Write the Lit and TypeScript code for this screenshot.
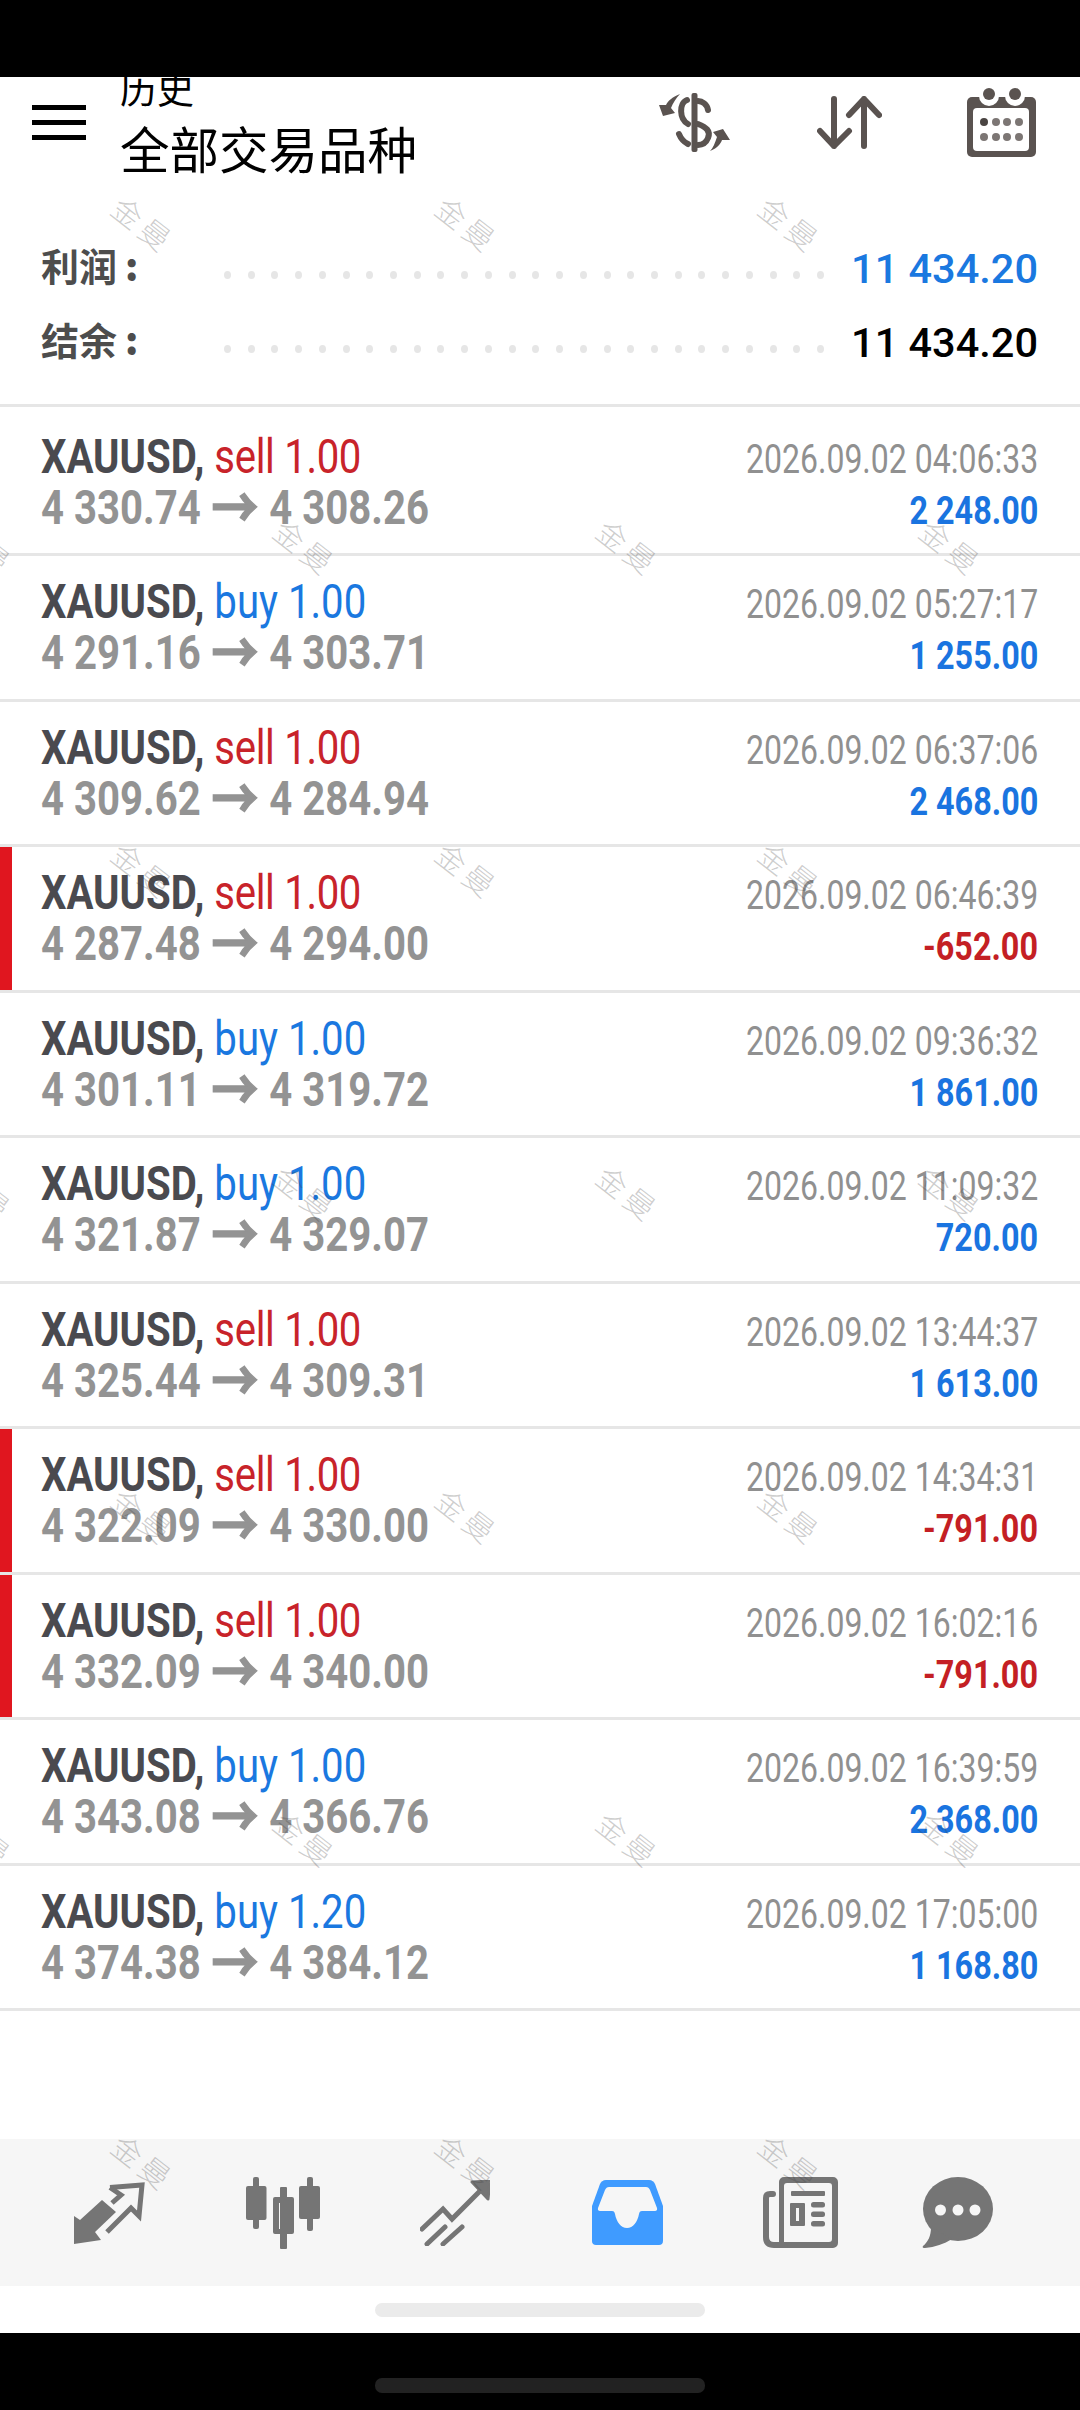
import { LitElement, html, css, svg } from 'lit';
import { customElement } from 'lit/decorators.js';

type Trade = { side: 'sell' | 'buy'; lots: string; open: string; close: string; time: string; profit: string };

const trades: Trade[] = [
  { side: 'sell', lots: '1.00', open: '4 330.74', close: '4 308.26', time: '04:06:33', profit: '2 248.00' },
  { side: 'buy', lots: '1.00', open: '4 291.16', close: '4 303.71', time: '05:27:17', profit: '1 255.00' },
  { side: 'sell', lots: '1.00', open: '4 309.62', close: '4 284.94', time: '06:37:06', profit: '2 468.00' },
  { side: 'sell', lots: '1.00', open: '4 287.48', close: '4 294.00', time: '06:46:39', profit: '-652.00' },
  { side: 'buy', lots: '1.00', open: '4 301.11', close: '4 319.72', time: '09:36:32', profit: '1 861.00' },
  { side: 'buy', lots: '1.00', open: '4 321.87', close: '4 329.07', time: '11:09:32', profit: '720.00' },
  { side: 'sell', lots: '1.00', open: '4 325.44', close: '4 309.31', time: '13:44:37', profit: '1 613.00' },
  { side: 'sell', lots: '1.00', open: '4 322.09', close: '4 330.00', time: '14:34:31', profit: '-791.00' },
  { side: 'sell', lots: '1.00', open: '4 332.09', close: '4 340.00', time: '16:02:16', profit: '-791.00' },
  { side: 'buy', lots: '1.00', open: '4 343.08', close: '4 366.76', time: '16:39:59', profit: '2 368.00' },
  { side: 'buy', lots: '1.20', open: '4 374.38', close: '4 384.12', time: '17:05:00', profit: '1 168.80' },
];

// watermark grid, alternating rows are shifted by half a step
const marks: { x: number; y: number }[] = [];
for (let r = 0; r < 7; r++) {
  const y = 224 + r * 323;
  const xs = r % 2 === 0 ? [144, 468, 791] : [-17, 306, 629, 952];
  for (const x of xs) marks.push({ x, y });
}

const dots = Array.from({ length: 26 });

const dollarIcon = svg`<svg width="72" height="59" viewBox="0 0 72 59" fill="#5a5350">
  <rect x="32.5" y="0" width="6" height="59" rx="2"/>
  <g fill="none" stroke="#5a5350" stroke-width="6" stroke-linecap="round">
    <path d="M49 17C48 11 43 8 39 8"/>
    <path d="M28 7C20 10 20 26 29 31"/>
    <path d="M39 31C47 34 52 38 49 45C47 50 43 52 39 52"/>
    <path d="M20 41C22 46 25 49 29 51"/>
  </g>
  <path d="M21 1C13 4 9 8 7 12L0 12L4 23L16 20L12 15C14 10 17 5 21 1Z"/>
  <path d="M51 58C59 55 62 50 63 47L71 47L64 36L54 39L58 44C56 50 54 55 51 58Z"/>
</svg>`;

const sortIcon = svg`<svg width="65" height="53" viewBox="0 0 65 53" fill="none" stroke="#5a5350" stroke-width="6" stroke-linecap="round" stroke-linejoin="round">
  <path d="M17 3V50M3 35L17 50L32 35"/>
  <path d="M47 50V3M32 19L47 3L62 19"/>
</svg>`;

const calendarIcon = svg`<svg width="69" height="69" viewBox="0 0 69 69">
  <rect y="9" width="69" height="60" rx="5" fill="#5a5350"/>
  <circle cx="22" cy="8" r="10" fill="#fff"/>
  <circle cx="48" cy="8" r="10" fill="#fff"/>
  <circle cx="22" cy="6" r="6" fill="#5a5350"/>
  <circle cx="48" cy="6" r="6" fill="#5a5350"/>
  <rect x="6" y="20" width="56" height="43" rx="4" fill="#fff"/>
  <g fill="#7c7674">
    <circle cx="17" cy="34" r="4" fill="#4a4442"/><circle cx="29" cy="34" r="4"/><circle cx="40" cy="34" r="4"/><circle cx="52" cy="34" r="4"/>
    <circle cx="17" cy="49" r="4"/><circle cx="29" cy="49" r="4"/><circle cx="40" cy="49" r="4"/><circle cx="52" cy="49" r="4"/>
  </g>
</svg>`;

const tradeIcon = svg`<svg width="72" height="62" viewBox="0 0 72 62" fill="#757575">
  <path d="M0 62L0 34L6 38L28 18L42 30L21 50L27 58Z"/>
  <g fill="none" stroke="#757575" stroke-width="5">
    <path d="M36 5.5L68 3L65 34L57 26L33 50"/>
    <path d="M36 5.5L47 13L38 21"/>
  </g>
</svg>`;

const candleIcon = svg`<svg width="74" height="72" viewBox="0 0 74 72" fill="#757575">
  <rect x="7" y="0" width="6" height="52" rx="2"/>
  <rect x="0" y="9" width="20.5" height="34" rx="2"/>
  <rect x="34" y="10" width="7" height="62" rx="1"/>
  <path fill-rule="evenodd" d="M29 20H46a2 2 0 0 1 2 2V55a2 2 0 0 1-2 2H29a2 2 0 0 1-2-2V22a2 2 0 0 1 2-2ZM33 26V52H41V26Z"/>
  <rect x="61" y="0" width="6" height="54" rx="2"/>
  <rect x="53" y="9" width="21" height="33" rx="2"/>
</svg>`;

const growthIcon = svg`<svg width="70" height="66" viewBox="0 0 70 66" fill="#757575">
  <g fill="none" stroke="#757575" stroke-width="5" stroke-linecap="round">
    <path d="M2 49L23 29L32 39L64 7"/>
    <path d="M7 64L25 47"/>
    <path d="M23 64L42 47"/>
  </g>
  <path d="M52 2L70 1L68 19Z" stroke="#757575" stroke-width="3" stroke-linejoin="round"/>
</svg>`;

const trayIcon = svg`<svg width="71" height="65" viewBox="0 0 71 65">
  <path d="M14 0H57C60 0 62 2 63 4L71 26V61C71 63.500 69.500 65 67 65H4C1.500 65 0 63.500 0 61V26L8 4C9 2 11 0 14 0Z" fill="#3f9bff"/>
  <path d="M17 7H54C56 7 57 8 58 10L65 28C65.500 30 64.500 31 63 31H50C48 31 47.500 32 47 34C45.500 42 41 48 35 48C29 48 24.500 42 23 34C22.500 32 22 31 20 31H8C6.500 31 5.500 30 6 28L13 10C14 8 15 7 17 7Z" fill="#f6f6f6"/>
</svg>`;

const newsIcon = svg`<svg width="75" height="71" viewBox="0 0 75 71" fill="#757575">
  <path fill-rule="evenodd" d="M21 0H70a5 5 0 0 1 5 5V66a5 5 0 0 1-5 5H21a5 5 0 0 1-5-5V5a5 5 0 0 1 5-5ZM24 6a3 3 0 0 0-3 3V65H66a3 3 0 0 0 3-3V9a3 3 0 0 0-3-3Z"/>
  <path d="M10 17H7Q3 17 3 21V60Q3 68 11 68H22" fill="none" stroke="#757575" stroke-width="6" stroke-linecap="round"/>
  <rect x="28" y="14" width="34" height="5" rx="1"/>
  <path fill-rule="evenodd" d="M28 26H41a1 1 0 0 1 1 1V48a1 1 0 0 1-1 1H28a1 1 0 0 1-1-1V27a1 1 0 0 1 1-1ZM33 31V44H36V31Z"/>
  <rect x="48" y="25" width="14" height="5.500" rx="2.500"/>
  <rect x="48" y="34.500" width="14" height="5.500" rx="2.500"/>
  <rect x="48" y="44" width="14" height="5.500" rx="2.500"/>
</svg>`;

const chatIcon = svg`<svg width="71" height="71" viewBox="0 0 71 71" fill="#757575">
  <ellipse cx="36" cy="32" rx="35" ry="32"/>
  <path d="M9 50C9 59 6 65 1 69C0 70.500 1 71 3 71C13 70 22 67 30 62Z"/>
  <g fill="#f6f6f6"><circle cx="18.500" cy="33" r="5.500"/><circle cx="36" cy="33" r="5.500"/><circle cx="53" cy="33" r="5.500"/></g>
</svg>`;

@customElement('app-root')
export class AppRoot extends LitElement {
  static styles = css`
    :host {
      display: block;
      position: relative;
      width: 1080px;
      height: 2410px;
      overflow: hidden;
      background: #fff;
      font-family: Roboto, 'Noto Sans CJK SC', sans-serif;
    }
    .screen {
      display: flex;
      flex-direction: column;
      height: 100%;
    }
    .status {
      flex: none;
      height: 77px;
      background: #000;
      position: relative;
      z-index: 2;
    }
    .header {
      flex: none;
      height: 154px;
      display: flex;
      align-items: flex-start;
      padding: 0 44px 0 32px;
      overflow: hidden;
    }
    .burger {
      flex: none;
      width: 54px;
      height: 90px;
      display: flex;
      flex-direction: column;
      justify-content: center;
      gap: 10px;
      margin-right: 34px;
    }
    .burger i {
      display: block;
      height: 5px;
      background: #000;
    }
    .title {
      font-family: 'Noto Sans CJK SC', sans-serif;
      color: #000;
      margin-top: -7px;
    }
    .title .small {
      font-size: 37px;
      line-height: 36px;
      height: 36px;
    }
    .title .big {
      font-size: 49.500px;
      line-height: 50px;
      margin-top: 17px;
      white-space: nowrap;
    }
    .tools {
      margin-left: auto;
      height: 90px;
      display: flex;
      align-items: center;
    }
    .tools svg {
      display: block;
    }
    .tools .sort {
      margin: 0 85px 0 86px;
    }
    .summary {
      flex: none;
      height: 176px;
      padding: 0 42px 0 41px;
      box-sizing: border-box;
      border-bottom: 3px solid #e6e6e6;
    }
    .sum-row {
      height: 74px;
      display: flex;
      align-items: center;
    }
    .sum-label {
      width: 183px;
      flex: none;
      font-family: 'Noto Sans CJK SC', sans-serif;
      font-weight: 700;
      font-size: 38px;
      color: #4d4d4d;
      margin-bottom: 8px;
    }
    .sum-label b {
      margin-left: 8px;
    }
    .dots {
      width: 600px;
      flex: none;
      display: flex;
      justify-content: space-between;
      margin-top: 14px;
    }
    .dots i {
      width: 7px;
      height: 8px;
      border-radius: 50%;
      background: #e6e6e6;
    }
    .sum-value {
      margin-left: auto;
      font-size: 41.500px;
      font-weight: 500;
      color: #000;
    }
    .sum-value.blue {
      color: #1a78e0;
    }
    .list {
      flex: none;
      padding-top: 3.500px;
    }
    .row {
      height: 145.500px;
      box-sizing: border-box;
      border-bottom: 3px solid #e6e6e6;
      display: flex;
    }
    .bar {
      flex: none;
      width: 12px;
    }
    .bar.red {
      background: #e0161f;
    }
    .body {
      flex: 1;
      padding: 20px 42px 0 29px;
    }
    .line {
      height: 51px;
      display: flex;
      justify-content: space-between;
      align-items: baseline;
      white-space: nowrap;
    }
    .left {
      transform: scaleX(0.836);
      transform-origin: left center;
      font-size: 48px;
      line-height: 51px;
    }
    .right {
      transform-origin: right center;
      line-height: 51px;
    }
    .symbol {
      font-weight: 700;
      color: #4a4a4f;
    }
    .side {
      font-weight: 400;
    }
    .side.sell {
      color: #c8232a;
      letter-spacing: -0.4px;
    }
    .side.buy {
      color: #1a78e0;
    }
    .prices {
      font-weight: 700;
      color: #939393;
    }
    .arrow {
      font-size: 56px;
      line-height: 40px;
      margin: 0 1px;
      vertical-align: -4px;
      -webkit-text-stroke: 1.6px #939393;
    }
    .time {
      font-size: 40px;
      color: #909090;
      transform: scaleX(0.8);
    }
    .profit {
      font-size: 38px;
      font-weight: 700;
      color: #1a74e0;
      transform: scaleX(0.852);
    }
    .profit.loss {
      color: #c41f24;
    }
    .spacer {
      flex: 1;
    }
    .nav {
      flex: none;
      height: 147px;
      background: #f6f6f6;
      display: flex;
      align-items: center;
      gap: 100px;
      padding-left: 74px;
    }
    .nav svg {
      display: block;
      flex: none;
    }
    .nav svg:nth-child(4) {
      margin-left: 2px;
    }
    .nav .last {
      margin-left: -16px;
    }
    .gesture {
      flex: none;
      height: 47px;
      display: flex;
      justify-content: center;
      align-items: center;
    }
    .pill {
      width: 330px;
      height: 14px;
      border-radius: 7px;
      background: #ebebeb;
    }
    .bottom {
      flex: none;
      height: 77px;
      background: #000;
      display: flex;
      justify-content: center;
      padding-top: 45px;
      box-sizing: border-box;
    }
    .bottom .pill {
      background: #222;
      height: 15px;
    }
    .mark {
      position: absolute;
      pointer-events: none;
      font-family: 'Noto Sans CJK SC', sans-serif;
      font-weight: 300;
      font-size: 30px;
      line-height: 30px;
      letter-spacing: 5px;
      white-space: nowrap;
      color: rgba(60, 60, 60, 0.26);
      transform: translate(-50%, -50%) rotate(38deg);
    }
  `;

  renderTrade(t: Trade) {
    const loss = t.profit.startsWith('-');
    return html`
      <div class="row">
        <div class="bar ${loss ? 'red' : ''}"></div>
        <div class="body">
          <div class="line">
            <span class="left"><span class="symbol">XAUUSD,</span> <span class="side ${t.side}">${t.side} ${t.lots}</span></span>
            <span class="right time">2026.09.02 ${t.time}</span>
          </div>
          <div class="line">
            <span class="left prices">${t.open} <span class="arrow">→</span> ${t.close}</span>
            <span class="right profit ${loss ? 'loss' : ''}">${t.profit}</span>
          </div>
        </div>
      </div>
    `;
  }

  render() {
    return html`
      <div class="screen">
        <div class="status"></div>
        <div class="header">
          <div class="burger"><i></i><i></i><i></i></div>
          <div class="title">
            <div class="small">历史</div>
            <div class="big">全部交易品种</div>
          </div>
          <div class="tools">
            ${dollarIcon}
            <div class="sort">${sortIcon}</div>
            ${calendarIcon}
          </div>
        </div>
        <div class="summary">
          <div class="sum-row">
            <span class="sum-label">利润<b>:</b></span>
            <div class="dots">${dots.map(() => html`<i></i>`)}</div>
            <span class="sum-value blue">11 434.20</span>
          </div>
          <div class="sum-row">
            <span class="sum-label">结余<b>:</b></span>
            <div class="dots">${dots.map(() => html`<i></i>`)}</div>
            <span class="sum-value">11 434.20</span>
          </div>
        </div>
        <div class="list">${trades.map((t) => this.renderTrade(t))}</div>
        <div class="spacer"></div>
        <div class="nav">
          ${tradeIcon}${candleIcon}${growthIcon}${trayIcon}${newsIcon}
          <div class="last">${chatIcon}</div>
        </div>
        <div class="gesture"><div class="pill"></div></div>
        <div class="bottom"><div class="pill"></div></div>
      </div>
      ${marks.map((m) => html`<div class="mark" style="left:${m.x}px;top:${m.y}px">金曼</div>`)}
    `;
  }
}
